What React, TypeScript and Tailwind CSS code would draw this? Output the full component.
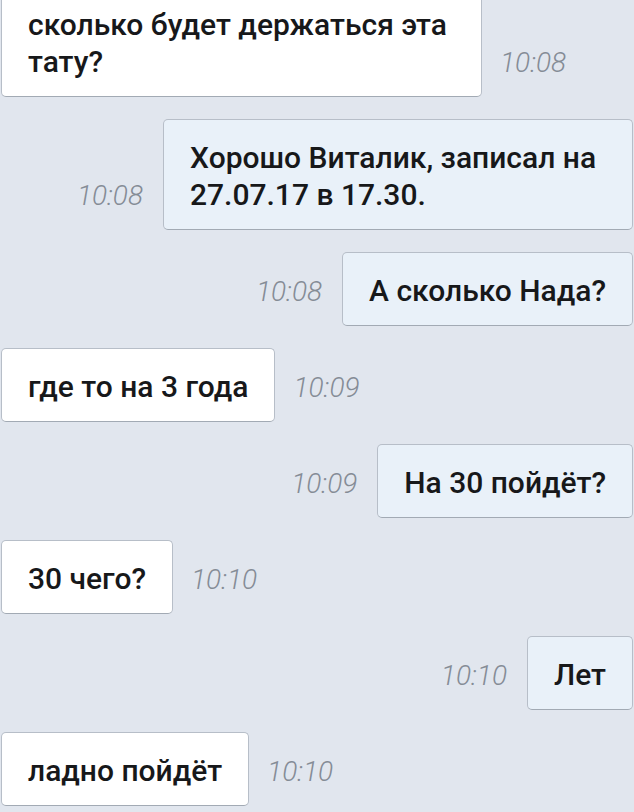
import React from "react";

type Message = {
  text: string;
  time: string;
  mine: boolean;
  width?: string;
};

const messages: Message[] = [
  { text: "сколько будет держаться эта\nтату?", time: "10:08", mine: false, width: "w-[481px]" },
  { text: "Хорошо Виталик, записал на\n27.07.17 в 17.30.", time: "10:08", mine: true, width: "w-[470px]" },
  { text: "А сколько Нада?", time: "10:08", mine: true },
  { text: "где то на 3 года", time: "10:09", mine: false },
  { text: "На 30 пойдёт?", time: "10:09", mine: true },
  { text: "30 чего?", time: "10:10", mine: false },
  { text: "Лет", time: "10:10", mine: true },
  { text: "ладно пойдёт", time: "10:10", mine: false },
];

const Bubble: React.FC<{ msg: Message }> = ({ msg }) => (
  <div
    className={`whitespace-pre-line rounded-[5px] border border-[#b7bec8] border-b-[#a2aab4] pt-[19px] pb-4 px-[26px] text-[30px] leading-[37px] font-medium text-[#17181a] ${
      msg.mine ? "bg-[#e9f1f9]" : "bg-white"
    } ${msg.width ?? ""}`}
  >
    {msg.text}
  </div>
);

const Time: React.FC<{ time: string }> = ({ time }) => (
  <span className="text-[28px] leading-[28px] font-light italic text-[#858c96]">{time}</span>
);

export default function App() {
  return (
    <div
      className="h-[812px] w-[634px] overflow-hidden bg-[#e1e6ee]"
      style={{ fontFamily: "Roboto, 'Noto Sans', sans-serif" }}
    >
      <div className="-mt-[14px] flex flex-col gap-[22px] pl-px pr-px">
        {messages.map((msg, i) =>
          msg.mine ? (
            <div key={i} className="flex items-baseline-last justify-end gap-[20px]">
              <Time time={msg.time} />
              <Bubble msg={msg} />
            </div>
          ) : (
            <div key={i} className="flex items-baseline-last justify-start gap-[18px]">
              <Bubble msg={msg} />
              <Time time={msg.time} />
            </div>
          )
        )}
      </div>
    </div>
  );
}
